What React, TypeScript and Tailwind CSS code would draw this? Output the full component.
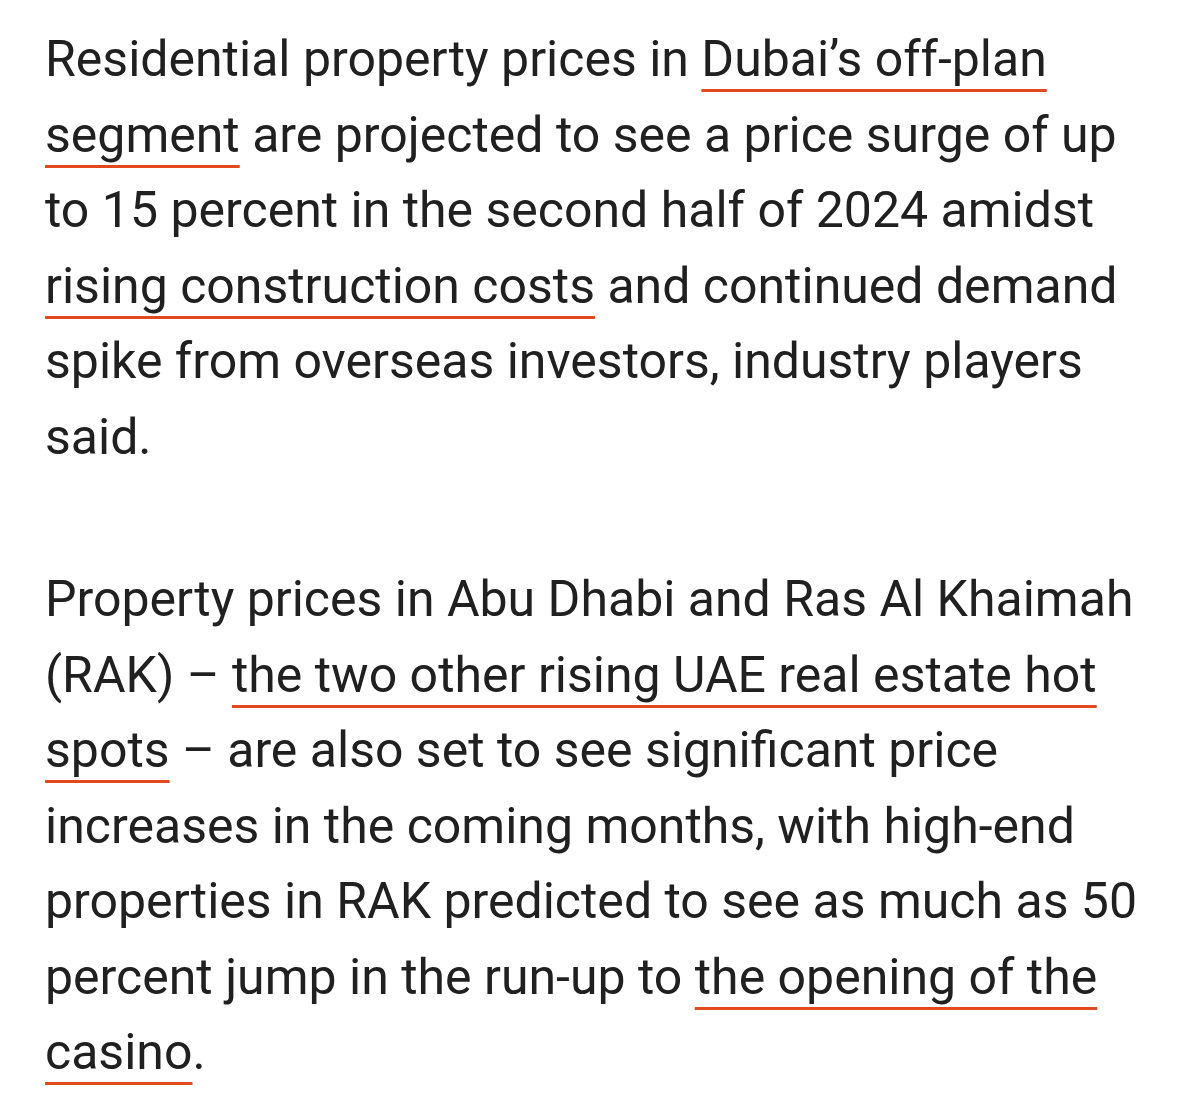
const link =
  "underline decoration-[#e2491d] decoration-[3px] underline-offset-[13px] [text-decoration-skip-ink:none]";

export default function App() {
  return (
    <div className="min-h-[1102px] bg-white px-[45px] pt-[22px] font-['Roboto',sans-serif] text-[50px] leading-[75.5px] text-[#202020]">
      <div className="w-[1112px] space-y-[87px]">
        <p>
          Residential property prices in{" "}
          <a className={link}>Dubai’s off-plan segment</a> are projected to see a
          price surge of up to 15 percent in the second half of 2024 amidst{" "}
          <a className={link}>rising construction costs</a> and continued demand
          spike from overseas investors, industry players said.
        </p>
        <p>
          Property prices in Abu Dhabi and Ras Al Khaimah (RAK) –{" "}
          <a className={link}>the two other rising UAE real estate hot spots</a>{" "}
          – are also set to see significant price increases in the coming months,
          with high-end properties in RAK predicted to see as much as 50 percent
          jump in the run-up to <a className={link}>the opening of the casino</a>.
        </p>
      </div>
    </div>
  );
}
